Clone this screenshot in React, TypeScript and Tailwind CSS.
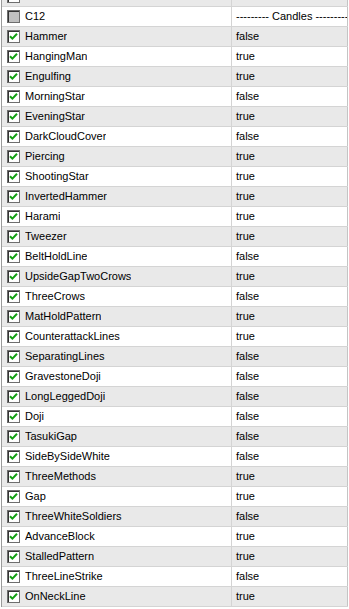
const rows: [string, boolean][] = [
  ["Hammer", false],
  ["HangingMan", true],
  ["Engulfing", true],
  ["MorningStar", false],
  ["EveningStar", true],
  ["DarkCloudCover", false],
  ["Piercing", true],
  ["ShootingStar", true],
  ["InvertedHammer", true],
  ["Harami", true],
  ["Tweezer", true],
  ["BeltHoldLine", false],
  ["UpsideGapTwoCrows", true],
  ["ThreeCrows", false],
  ["MatHoldPattern", true],
  ["CounterattackLines", true],
  ["SeparatingLines", false],
  ["GravestoneDoji", false],
  ["LongLeggedDoji", false],
  ["Doji", false],
  ["TasukiGap", false],
  ["SideBySideWhite", false],
  ["ThreeMethods", true],
  ["Gap", true],
  ["ThreeWhiteSoldiers", false],
  ["AdvanceBlock", true],
  ["StalledPattern", true],
  ["ThreeLineStrike", false],
  ["OnNeckLine", true],
];

function CheckBox({ checked = true, disabled = false }: { checked?: boolean; disabled?: boolean }) {
  return (
    <div
      className={`w-[13px] h-[13px] shrink-0 border border-[#6e6e6e] shadow-[inset_1px_1px_0_#333] flex items-center justify-center ${
        disabled ? "bg-[#c0c0c0]" : "bg-white"
      }`}
    >
      {checked && !disabled && (
        <svg width="9" height="9" viewBox="0 0 9 9">
          <path d="M1 4.2 L3.4 6.6 L8 1.8" fill="none" stroke="#12a012" strokeWidth="2" />
        </svg>
      )}
    </div>
  );
}

interface RowProps {
  label: string;
  value: string;
  gray?: boolean;
  disabled?: boolean;
}

function Row({ label, value, gray = false, disabled = false }: RowProps) {
  return (
    <div className={`flex h-[20px] border-b border-[#d4d4d4] ${gray ? "bg-[#e9e9e9]" : "bg-white"}`}>
      <div className="w-[230px] flex items-center gap-[5px] pl-[5px] border-r border-[#d4d4d4]">
        <CheckBox disabled={disabled} />
        <span className="truncate">{label}</span>
      </div>
      <div className="w-[116px] flex items-center pl-[4px] overflow-hidden whitespace-nowrap border-r border-[#c4c4c4]">
        {value}
      </div>
    </div>
  );
}

export default function App() {
  return (
    <div
      className="w-[349px] h-[609px] overflow-hidden bg-white text-[11px] text-black"
      style={{ fontFamily: '"Liberation Sans", Arial, sans-serif' }}
    >
      <div className="-mt-[13px] ml-px border-l border-[#9a9a9a] w-[347px]">
        <Row label="Bullish" value="false" gray />
        <Row label="C12" value="--------- Candles ---------" disabled />
        {rows.map(([label, v], i) => (
          <Row key={label} label={label} value={v ? "true" : "false"} gray={i % 2 === 0} />
        ))}
      </div>
    </div>
  );
}
